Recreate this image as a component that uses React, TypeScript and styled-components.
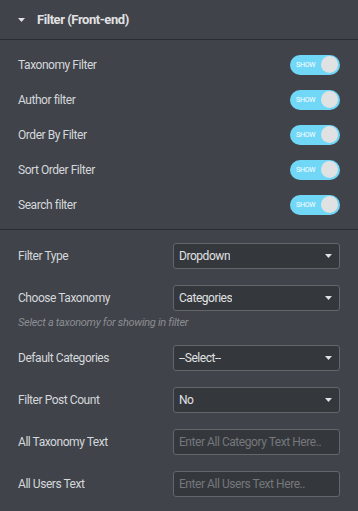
import styled, { createGlobalStyle } from "styled-components";

const GlobalStyle = createGlobalStyle`
  html, body {
    margin: 0;
    padding: 0;
    background: #404349;
  }
  * {
    box-sizing: border-box;
  }
`;

const toggles = [
  "Taxonomy Filter",
  "Author filter",
  "Order By Filter",
  "Sort Order Filter",
  "Search filter",
];

type Control = {
  label: string;
  kind: "select" | "text";
  value: string;
  description?: string;
};

const controls: Control[] = [
  { label: "Filter Type", kind: "select", value: "Dropdown" },
  {
    label: "Choose Taxonomy",
    kind: "select",
    value: "Categories",
    description: "Select a taxonomy for showing in filter",
  },
  { label: "Default Categories", kind: "select", value: "--Select--" },
  { label: "Filter Post Count", kind: "select", value: "No" },
  { label: "All Taxonomy Text", kind: "text", value: "Enter All Category Text Here.." },
  { label: "All Users Text", kind: "text", value: "Enter All Users Text Here.." },
];

const Caret = () => (
  <svg width={7} height={4} viewBox="0 0 7 4">
    <path d="M0 0 L7 0 L3.5 4 Z" fill="#e0e1e3" />
  </svg>
);

const App = () => {
  return (
    <StPanel>
      <GlobalStyle />
      <StHeader>
        <Caret />
        <StTitle>Filter (Front-end)</StTitle>
      </StHeader>

      <StToggleSection>
        {toggles.map((label) => (
          <StToggleRow key={label}>
            <StLabel>{label}</StLabel>
            <StSwitch>
              <StSwitchText>Show</StSwitchText>
              <StKnob />
            </StSwitch>
          </StToggleRow>
        ))}
      </StToggleSection>

      <StControlSection>
        {controls.map((c) => (
          <div key={c.label}>
            <StControlRow>
              <StLabel>{c.label}</StLabel>
              <StField>
                <StFieldText $placeholder={c.kind === "text"}>{c.value}</StFieldText>
                {c.kind === "select" && <Caret />}
              </StField>
            </StControlRow>
            {c.description && <StDescription>{c.description}</StDescription>}
          </div>
        ))}
      </StControlSection>
    </StPanel>
  );
};

export default App;

const StPanel = styled.div`
  width: 358px;
  min-height: 511px;
  background: #404349;
  font-family: Roboto, "Liberation Sans", sans-serif;
  color: #e0e1e3;
`;

const StHeader = styled.div`
  display: flex;
  align-items: center;
  gap: 12px;
  height: 40px;
  padding: 0 18px;
  border-bottom: 1px solid #2b2c31;
`;

const StTitle = styled.span`
  font-size: 13px;
  font-weight: 700;
  letter-spacing: -0.45px;
`;

const StToggleSection = styled.div`
  padding: 7px 18px 7px;
  border-bottom: 1px solid #2b2c31;
`;

const StToggleRow = styled.div`
  display: flex;
  align-items: center;
  justify-content: space-between;
  height: 35px;
`;

const StLabel = styled.span`
  font-size: 12px;
  letter-spacing: -0.45px;
  color: #d5d8dc;
`;

const StSwitch = styled.div`
  display: flex;
  align-items: center;
  justify-content: space-between;
  width: 50px;
  height: 20px;
  padding: 0 2px 0 6px;
  border-radius: 10px;
  background: #71d7f7;
`;

const StSwitchText = styled.span`
  font-size: 7px;
  text-transform: uppercase;
  color: #ffffff;
  letter-spacing: -0.2px;
`;

const StKnob = styled.div`
  width: 17px;
  height: 17px;
  border-radius: 50%;
  background: #e0e1e3;
`;

const StControlSection = styled.div`
  display: flex;
  flex-direction: column;
  gap: 16px;
  padding: 13px 18px;
`;

const StControlRow = styled.div`
  display: flex;
  align-items: center;
  justify-content: space-between;
`;

const StField = styled.div`
  display: flex;
  align-items: center;
  justify-content: space-between;
  width: 167px;
  height: 26px;
  padding: 0 7px 0 5px;
  border: 1px solid #64666a;
  border-radius: 3px;
  background: #34383c;
`;

const StFieldText = styled.span<{ $placeholder: boolean }>`
  overflow: hidden;
  white-space: nowrap;
  font-size: 12px;
  letter-spacing: -0.45px;
  color: ${({ $placeholder }) => ($placeholder ? "#75777b" : "#e0e1e3")};
`;

const StDescription = styled.div`
  margin-top: 5px;
  line-height: 13px;
  font-size: 11px;
  font-style: italic;
  letter-spacing: -0.3px;
  color: #8c8e93;
`;
